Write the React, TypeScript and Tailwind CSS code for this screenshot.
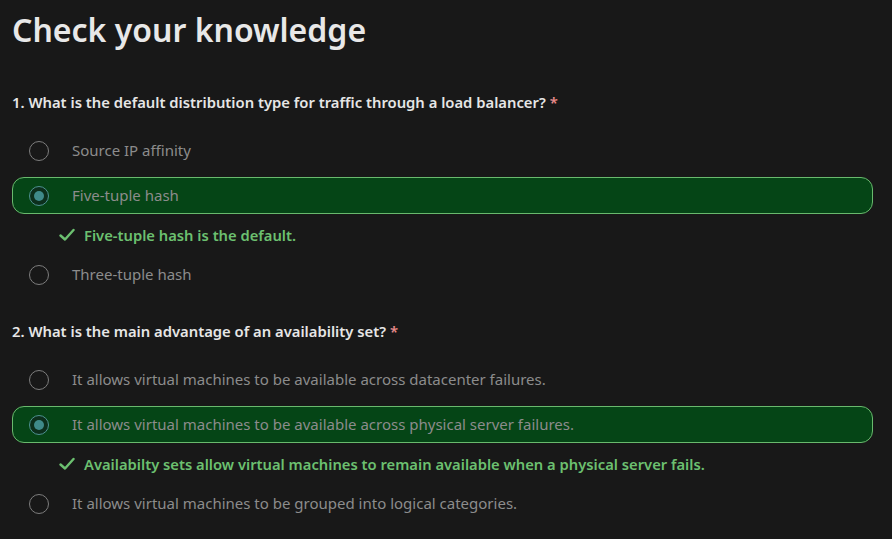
import React from 'react';

type Option = { text: string; selected?: boolean; feedback?: string };

const questions: { title: string; options: Option[] }[] = [
  {
    title: '1. What is the default distribution type for traffic through a load balancer?',
    options: [
      { text: 'Source IP affinity' },
      { text: 'Five-tuple hash', selected: true, feedback: 'Five-tuple hash is the default.' },
      { text: 'Three-tuple hash' },
    ],
  },
  {
    title: '2. What is the main advantage of an availability set?',
    options: [
      { text: 'It allows virtual machines to be available across datacenter failures.' },
      {
        text: 'It allows virtual machines to be available across physical server failures.',
        selected: true,
        feedback: 'Availabilty sets allow virtual machines to remain available when a physical server fails.',
      },
      { text: 'It allows virtual machines to be grouped into logical categories.' },
    ],
  },
];

function Radio({ checked }: { checked?: boolean }) {
  if (checked) {
    return (
      <span className="flex h-5 w-5 shrink-0 items-center justify-center rounded-full border-[1.5px] border-[#4f9191] bg-[#0c2f1c]">
        <span className="h-[10px] w-[10px] rounded-full bg-[#3f8a8a]" />
      </span>
    );
  }
  return <span className="h-5 w-5 shrink-0 rounded-full border-[1.5px] border-[#7d7d7d]" />;
}

export default function App() {
  return (
    <div className="min-h-[539px] bg-[#181818] pl-3 pr-[19px] pt-[6px] font-['Noto_Sans',sans-serif]">
      <h1 className="text-[32px] font-semibold leading-[48px] text-[#e8e8e8]">Check your knowledge</h1>

      <div className="mt-[38px] flex flex-col gap-[28px]">
        {questions.map((q, qi) => (
          <div key={qi}>
            <p className="text-[14.8px] font-semibold leading-5 text-[#e6e6e6]">
              {q.title} <span className="text-[#e88a8a]">*</span>
            </p>
            <div className="mt-5 flex flex-col gap-2">
              {q.options.map((o, oi) => (
                <React.Fragment key={oi}>
                  <div
                    className={
                      o.selected
                        ? 'flex h-[37px] items-center gap-[23px] rounded-[12px] border border-[#69b96d] bg-[#054516] pl-4'
                        : 'flex h-[37px] items-center gap-[23px] rounded-[12px] border border-transparent pl-4'
                    }
                  >
                    <Radio checked={o.selected} />
                    <span className="text-[15px] text-[#8c8c8c]">{o.text}</span>
                  </div>
                  {o.feedback && (
                    <div className="flex h-[26px] items-center gap-[9px] pl-[47px]">
                      <svg width="16" height="14" viewBox="0 0 16 14" className="shrink-0">
                        <path d="M1.5 7.5 L6 11.5 L14.5 2" fill="none" stroke="#6cc070" strokeWidth="2.4" strokeLinecap="round" strokeLinejoin="round" />
                      </svg>
                      <span className="text-[14.76px] font-semibold text-[#6cc070]">{o.feedback}</span>
                    </div>
                  )}
                </React.Fragment>
              ))}
            </div>
          </div>
        ))}
      </div>
    </div>
  );
}
